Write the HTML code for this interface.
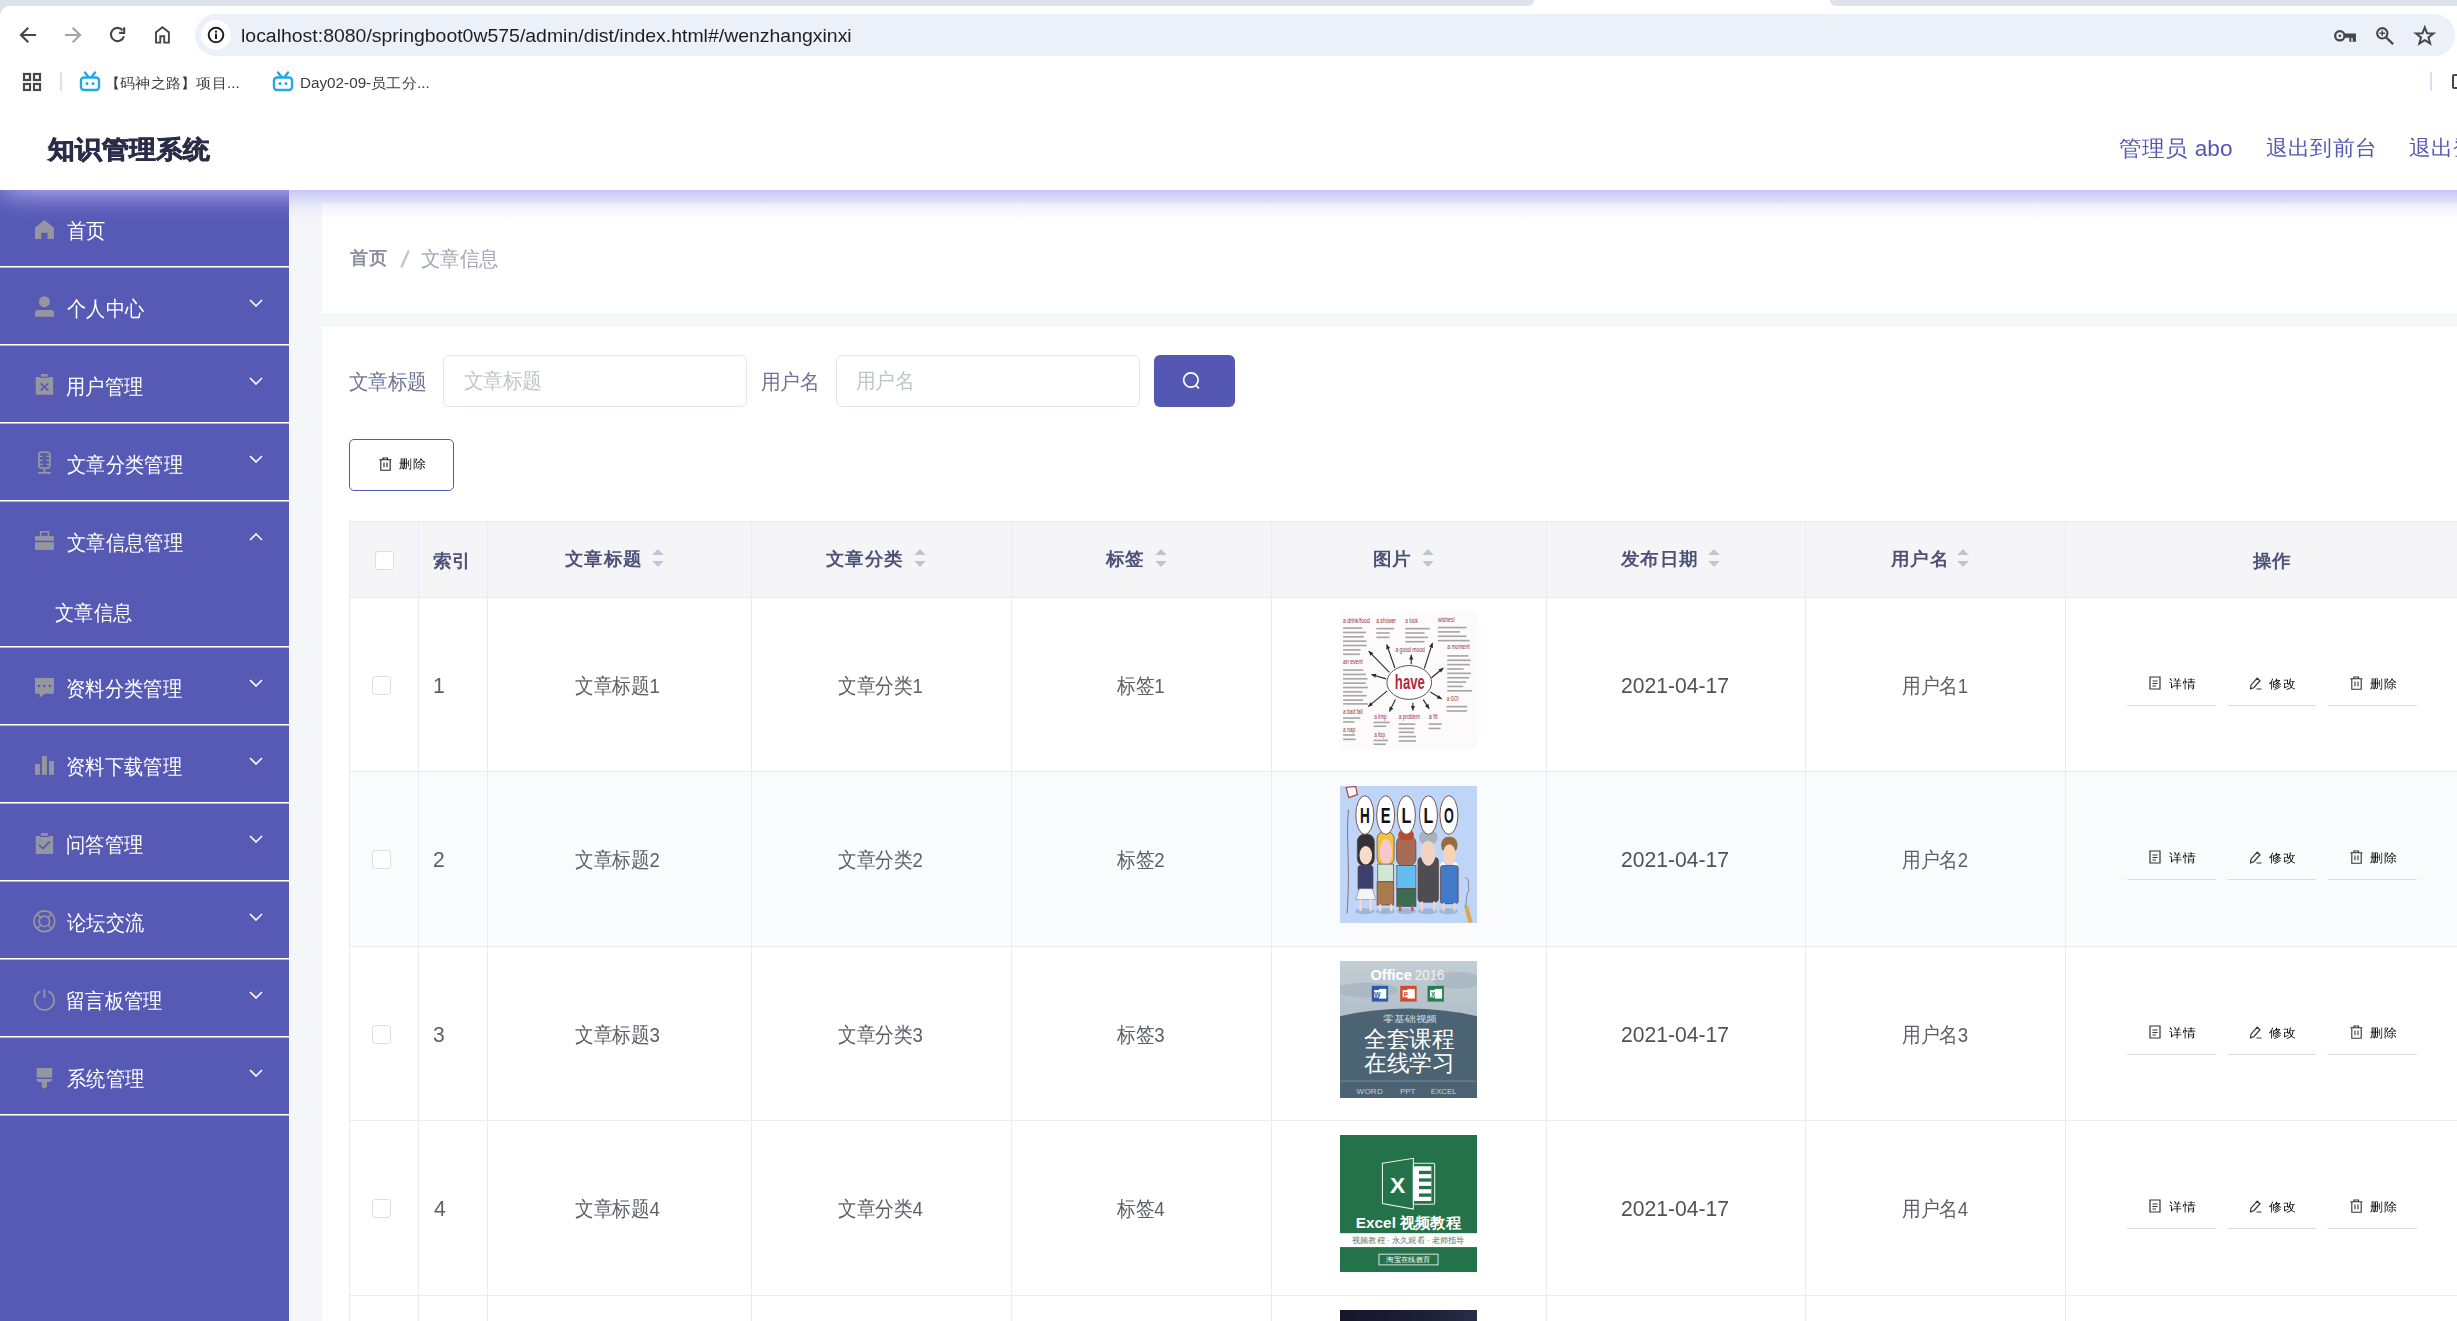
<!DOCTYPE html>
<html><head><meta charset="utf-8">
<style>
*{box-sizing:border-box;margin:0;padding:0}
html,body{width:2457px;height:1321px;overflow:hidden;background:#fff;font-family:"Liberation Sans",sans-serif}
.a{position:absolute}
.t{position:absolute;white-space:nowrap;line-height:30px;height:30px;transform-origin:0 0}
/* chrome */
#tabl{left:0;top:0;width:1534px;height:6px;background:#dee3ea;border-bottom-right-radius:8px}
#tabr{left:1830px;top:0;width:627px;height:6px;background:#dee3ea;border-bottom-left-radius:8px}
#tabbg{left:0;top:0;width:30px;height:30px;background:#dee3ea}
#toolbar{left:0;top:6px;width:2457px;height:104px;background:#fff;border-top-left-radius:10px}
#omni{left:195px;top:14px;width:2260px;height:42px;background:#ecf0f8;border-radius:21px}
#info{left:201px;top:20px;width:30px;height:30px;background:#fff;border-radius:15px}
#url{left:242px;top:20px;font-size:22px;color:#1f1f1f;line-height:30px}
.bm{font-size:17px;color:#3c3c3c;line-height:24px;height:24px}
/* app header */
#hdr{left:0;top:110px;width:2457px;height:80px;background:#fff}
#title{left:47px;top:135px;font-size:28px;font-weight:bold;color:#2b2d42;line-height:30px}
.hl{font-size:22px;color:#5558b3;line-height:30px;top:133px}
/* sidebar */
#side{left:0;top:190px;width:289px;height:1131px;background:#575ab5}
#sideedge{left:289px;top:190px;width:1px;height:1131px;background:#fdfdff}
.sl{left:0;width:289px;height:2px;background:linear-gradient(#fff 0,#fff 50%,rgba(255,255,255,.55) 50%)}
.st{font-size:21px;color:#fff;left:67px}
.si{left:25px;width:40px;height:40px}
.chev{left:249px;width:14px;height:8px}
/* main */
#main{left:290px;top:190px;width:2167px;height:1131px;background:#f5f6f8}
#card1{left:322px;top:203px;width:2135px;height:110px;background:#fff}
#card2{left:322px;top:327px;width:2135px;height:994px;background:#fff}
#shadow{left:0;top:190px;width:2457px;height:34px;background:linear-gradient(to bottom,rgba(173,174,245,.68) 0px,rgba(173,174,245,.5) 5px,rgba(173,174,245,.35) 10px,rgba(173,174,245,.2) 15px,rgba(173,174,245,.1) 20px,rgba(173,174,245,.03) 27px,rgba(173,174,245,0) 34px);-webkit-mask-image:linear-gradient(to right,rgba(0,0,0,.45) 0px,rgba(0,0,0,.85) 18px,#000 36px);mask-image:linear-gradient(to right,rgba(0,0,0,.45) 0px,rgba(0,0,0,.85) 18px,#000 36px)}
.bc{font-size:21px;top:243px}
.lab{font-size:21px;color:#6f7290;top:366px}
.inp{top:355px;height:52px;width:304px;border:1.5px solid #e4e4f7;border-radius:6px;background:#fff}
.ph{font-size:21px;color:#c3c5cd;top:366px}
#sbtn{left:1154px;top:355px;width:81px;height:52px;background:#5558b2;border-radius:6px}
#dbtn{left:349px;top:439px;width:105px;height:52px;border:1.5px solid #5558b2;border-radius:5px;background:#fff}
/* table */
#thead{left:349px;top:521px;width:2108px;height:77px;background:#f5f5f8}
.vl{width:1px;background:#ebebf3}
.hl2{height:1px;background:#ebebf3}
.th{font-size:21px;font-weight:bold;color:#4d5179;top:544px}
.td{font-size:21px;color:#5f6066}
.cb{width:19px;height:19px;border:1.5px solid #dcdfe6;border-radius:3px;background:#fff}
.sort{width:12px;height:22px}
.img{left:1340px;width:137px;height:137px;overflow:hidden}
.op{font-size:14px;color:#222;line-height:18px;height:18px}
.opl{height:1.5px;background:#dcdce8;width:89px}
</style></head><body>
<!-- browser chrome -->
<div class="a" id="tabbg"></div>
<div class="a" id="tabl"></div>
<div class="a" id="tabr"></div>
<div class="a" id="toolbar"></div>
<svg class="a" style="left:14px;top:22px" width="170" height="26" viewBox="0 0 170 26">
 <g fill="none" stroke="#474747" stroke-width="2.2" stroke-linecap="square">
  <path d="M21 13H7.5M13.5 6.5L7 13l6.5 6.5"/>
 </g>
 <g fill="none" stroke="#a4a4a4" stroke-width="2.2" stroke-linecap="square">
  <path d="M52 13h13.5M59.5 6.5L66 13l-6.5 6.5"/>
 </g>
 <g fill="none" stroke="#474747" stroke-width="2.1">
  <path d="M108.56 8.26A6.6 6.6 0 1 0 109.9 14.2"/>
  <path d="M110.2 5.2V10.9H105.1"/>
 </g>
 <path d="M142 20.6V10.2L148.45 5.2L154.9 10.2V20.6H150.2V14.3H146.3V20.6Z" fill="none" stroke="#474747" stroke-width="1.9" stroke-linejoin="miter"/>
</svg>
<div class="a" id="omni"></div>
<div class="a" id="info"></div>
<svg class="a" style="left:207px;top:26px" width="18" height="18" viewBox="0 0 18 18"><circle cx="9" cy="9" r="7.3" fill="none" stroke="#1f1f1f" stroke-width="2"/><rect x="8" y="7.6" width="2" height="5.4" fill="#1f1f1f"/><rect x="8" y="4.6" width="2" height="2" fill="#1f1f1f"/></svg>
<svg class="a" style="left:2300px;top:0px" width="157" height="110" viewBox="0 0 1885 1321">
 <circle cx="478" cy="430" r="56" fill="none" stroke="#474747" stroke-width="27"/>
 <circle cx="478" cy="430" r="17" fill="#474747"/>
 <path d="M532 402H672V500H592V452H532Z" fill="#474747"/><rect x="616" y="455" width="16" height="45" fill="#ecf0f8"/>
 <circle cx="988" cy="400" r="62" fill="none" stroke="#474747" stroke-width="25"/>
 <path d="M1035 450L1118 530" stroke="#474747" stroke-width="28"/>
 <path d="M955 400H1021M988 367V433" stroke="#474747" stroke-width="17"/>
 <path d="M1498 330L1525.6 400L1603 401.8L1542.7 449.5L1563 522L1498 482L1433 522L1453.3 449.5L1392.7 401.8L1470.4 400Z" fill="none" stroke="#474747" stroke-width="24" stroke-linejoin="miter"/>
</svg>
<!-- bookmarks -->
<svg class="a" style="left:22px;top:72px" width="20" height="20" viewBox="0 0 20 20"><g fill="none" stroke="#474747" stroke-width="2.2"><rect x="2" y="2" width="6" height="6"/><rect x="12" y="2" width="6" height="6"/><rect x="2" y="12" width="6" height="6"/><rect x="12" y="12" width="6" height="6"/></g></svg>
<div class="a" style="left:60px;top:72px;width:2px;height:19px;background:#d3e0f5"></div>
<svg class="a" style="left:79px;top:71px" width="22" height="21" viewBox="0 0 22 21"><g fill="none" stroke="#22a9e2" stroke-width="2.4"><rect x="2" y="6.5" width="18" height="12.5" rx="3"/><path d="M6 1.5l3 4M16 1.5l-3 4" stroke-linecap="round"/></g><circle cx="8" cy="12.5" r="1.5" fill="#22a9e2"/><circle cx="14" cy="12.5" r="1.5" fill="#22a9e2"/></svg>
<svg class="a" style="left:272px;top:71px" width="22" height="21" viewBox="0 0 22 21"><g fill="none" stroke="#22a9e2" stroke-width="2.4"><rect x="2" y="6.5" width="18" height="12.5" rx="3"/><path d="M6 1.5l3 4M16 1.5l-3 4" stroke-linecap="round"/></g><circle cx="8" cy="12.5" r="1.5" fill="#22a9e2"/><circle cx="14" cy="12.5" r="1.5" fill="#22a9e2"/></svg>
<div class="a" style="left:2430px;top:72px;width:2px;height:19px;background:#d3e0f5"></div>
<div class="a" style="left:2452px;top:74px;width:10px;height:15px;border:2px solid #474747;border-radius:2px"></div>

<!-- app header -->
<div class="a" id="hdr"></div>

<!-- main bg -->
<div class="a" id="main"></div>
<div class="a" id="card1"></div>
<div class="a" id="card2"></div>

<div class="a" id="side"></div>
<div class="a" id="sideedge"></div>
<div class="a sl" style="top:266px"></div>
<div class="a sl" style="top:344px"></div>
<div class="a sl" style="top:422px"></div>
<div class="a sl" style="top:500px"></div>
<div class="a sl" style="top:646px"></div>
<div class="a sl" style="top:724px"></div>
<div class="a sl" style="top:802px"></div>
<div class="a sl" style="top:880px"></div>
<div class="a sl" style="top:958px"></div>
<div class="a sl" style="top:1036px"></div>
<div class="a sl" style="top:1114px"></div>
<svg class="a si" style="top:210px" viewBox="0 0 1321 1321"><path d="M330 590L640 330 955 590V955H745V755H535V955H330Z" fill="#95969f"/></svg>
<svg class="a si" style="top:287px" viewBox="0 0 1321 1321"><circle cx="640" cy="485" r="180" fill="#95969f"/><path d="M330 985V860Q330 760 430 760H855Q955 760 955 860V985Z" fill="#95969f"/></svg>
<svg class="a chev" style="top:299px" viewBox="0 0 14 8"><path d="M1 1l6 6 6-6" fill="none" stroke="#fff" stroke-width="1.6"/></svg>
<svg class="a si" style="top:365px" viewBox="0 0 1321 1321"><path d="M355 395H495V425H795V395H930V985H355Z" fill="#95969f"/><rect x="525" y="300" width="230" height="85" fill="#95969f"/><path d="M515 605L770 845M770 605L515 845" stroke="#575ab5" stroke-width="55"/></svg>
<svg class="a chev" style="top:377px" viewBox="0 0 14 8"><path d="M1 1l6 6 6-6" fill="none" stroke="#fff" stroke-width="1.6"/></svg>
<svg class="a si" style="top:443px" viewBox="0 0 1321 1321"><rect x="462" y="302" width="363" height="528" rx="95" fill="none" stroke="#95969f" stroke-width="58"/><path d="M470 440H590M700 440H820M470 575H590M700 575H820M470 705H590M700 705H820" stroke="#95969f" stroke-width="45"/><path d="M640 830V985M430 985H855" stroke="#95969f" stroke-width="58"/></svg>
<svg class="a chev" style="top:455px" viewBox="0 0 14 8"><path d="M1 1l6 6 6-6" fill="none" stroke="#fff" stroke-width="1.6"/></svg>
<svg class="a si" style="top:521px" viewBox="0 0 1321 1321"><rect x="517" y="355" width="255" height="160" fill="none" stroke="#95969f" stroke-width="48"/><rect x="330" y="500" width="625" height="150" fill="#95969f"/><rect x="330" y="700" width="625" height="255" fill="#95969f"/></svg>
<svg class="a chev" style="top:533px" viewBox="0 0 14 8"><path d="M1 7l6-6 6 6" fill="none" stroke="#fff" stroke-width="1.6"/></svg>
<svg class="a si" style="top:667px" viewBox="0 0 1321 1321"><path d="M330 365H955V885H660L490 1010V885H330Z" fill="#95969f"/><circle cx="460" cy="625" r="42" fill="#575ab5"/><circle cx="640" cy="625" r="42" fill="#575ab5"/><circle cx="820" cy="625" r="42" fill="#575ab5"/></svg>
<svg class="a chev" style="top:679px" viewBox="0 0 14 8"><path d="M1 1l6 6 6-6" fill="none" stroke="#fff" stroke-width="1.6"/></svg>
<svg class="a si" style="top:745px" viewBox="0 0 1321 1321"><rect x="330" y="630" width="160" height="355" fill="#95969f"/><rect x="562" y="365" width="160" height="620" fill="#95969f"/><rect x="795" y="530" width="160" height="455" fill="#95969f"/></svg>
<svg class="a chev" style="top:757px" viewBox="0 0 14 8"><path d="M1 1l6 6 6-6" fill="none" stroke="#fff" stroke-width="1.6"/></svg>
<svg class="a si" style="top:823px" viewBox="0 0 1321 1321"><path d="M355 430H495V460H795V430H930V1020H355Z" fill="#95969f"/><rect x="525" y="335" width="230" height="85" fill="#95969f"/><path d="M460 720L590 845 815 615" fill="none" stroke="#575ab5" stroke-width="55"/></svg>
<svg class="a chev" style="top:835px" viewBox="0 0 14 8"><path d="M1 1l6 6 6-6" fill="none" stroke="#fff" stroke-width="1.6"/></svg>
<svg class="a si" style="top:901px" viewBox="0 0 1321 1321"><circle cx="640" cy="670" r="342" fill="none" stroke="#95969f" stroke-width="55"/><circle cx="640" cy="670" r="172" fill="none" stroke="#95969f" stroke-width="55"/><path d="M400 430L520 550M880 430L760 550M400 910L520 790M880 910L760 790" stroke="#95969f" stroke-width="50"/></svg>
<svg class="a chev" style="top:913px" viewBox="0 0 14 8"><path d="M1 1l6 6 6-6" fill="none" stroke="#fff" stroke-width="1.6"/></svg>
<svg class="a si" style="top:979px" viewBox="0 0 1321 1321"><path d="M510 410A320 320 0 1 0 770 410" fill="none" stroke="#95969f" stroke-width="58"/><path d="M640 330V620" stroke="#95969f" stroke-width="62"/></svg>
<svg class="a chev" style="top:991px" viewBox="0 0 14 8"><path d="M1 1l6 6 6-6" fill="none" stroke="#fff" stroke-width="1.6"/></svg>
<svg class="a si" style="top:1057px" viewBox="0 0 1321 1321"><rect x="385" y="365" width="510" height="315" fill="#95969f"/><path d="M375 730H905Q895 835 725 835V990L640 1050 555 990V835Q385 835 375 730Z" fill="#95969f"/></svg>
<svg class="a chev" style="top:1069px" viewBox="0 0 14 8"><path d="M1 1l6 6 6-6" fill="none" stroke="#fff" stroke-width="1.6"/></svg>

<div class="a" style="left:400px;top:250px;width:10px;height:18px"><svg width="10" height="18" viewBox="0 0 10 18"><path d="M8.8 0.5L1.2 17.5" stroke="#c0c4cc" stroke-width="2.2"/></svg></div>
<div class="a inp" style="left:443px"></div>
<div class="a inp" style="left:836px"></div>
<div class="a" id="sbtn"></div>
<svg class="a" style="left:1181px;top:371px" width="20" height="20" viewBox="0 0 20 20"><circle cx="9.9" cy="9.0" r="7.2" fill="none" stroke="#fff" stroke-width="1.7"/><path d="M14.9 14.3L17.9 17.5" stroke="#fff" stroke-width="1.7"/></svg>
<div class="a" id="dbtn"></div>
<svg class="a" style="left:378.5px;top:456.5px" width="13" height="14" viewBox="0 0 13 14"><path d="M0.3 2.7H12.4 M3.9 2.7V1H8.5V2.7 M1.8 2.7V13.2H11.2V2.7 M5 5.5V10.3 M8 5.5V10.3" fill="none" stroke="#222" stroke-width="1.1"/></svg>
<div class="a" id="thead"></div>
<div class="a" style="left:349px;top:771px;width:2108px;height:175px;background:#fafbfd"></div>
<div class="a hl2" style="left:349px;top:521px;width:2108px"></div>
<div class="a hl2" style="left:349px;top:597px;width:2108px"></div>
<div class="a hl2" style="left:349px;top:771px;width:2108px"></div>
<div class="a hl2" style="left:349px;top:946px;width:2108px"></div>
<div class="a hl2" style="left:349px;top:1120px;width:2108px"></div>
<div class="a hl2" style="left:349px;top:1295px;width:2108px"></div>
<div class="a vl" style="left:349px;top:521px;height:800px"></div>
<div class="a vl" style="left:418px;top:521px;height:800px"></div>
<div class="a vl" style="left:487px;top:521px;height:800px"></div>
<div class="a vl" style="left:751px;top:521px;height:800px"></div>
<div class="a vl" style="left:1011px;top:521px;height:800px"></div>
<div class="a vl" style="left:1271px;top:521px;height:800px"></div>
<div class="a vl" style="left:1546px;top:521px;height:800px"></div>
<div class="a vl" style="left:1805px;top:521px;height:800px"></div>
<div class="a vl" style="left:2065px;top:521px;height:800px"></div>
<div class="a cb" style="left:375px;top:551px"></div>
<div class="a cb" style="left:372px;top:676px"></div>
<div class="a img" style="top:612px"><svg width="137" height="137" viewBox="37 37 1256 1256" preserveAspectRatio="none"><rect x="37" y="37" width="1256" height="1256" fill="#fcfafb"/><text x="65" y="135" font-family="Liberation Sans" font-size="58" textLength="245" lengthAdjust="spacingAndGlyphs" fill="#962f47">a drink/food</text><text x="370" y="135" font-family="Liberation Sans" font-size="58" textLength="180" lengthAdjust="spacingAndGlyphs" fill="#962f47">a shower</text><text x="635" y="135" font-family="Liberation Sans" font-size="58" textLength="115" lengthAdjust="spacingAndGlyphs" fill="#962f47">a look</text><text x="935" y="130" font-family="Liberation Sans" font-size="58" textLength="155" lengthAdjust="spacingAndGlyphs" fill="#962f47">wishes!</text><text x="545" y="405" font-family="Liberation Sans" font-size="58" textLength="270" lengthAdjust="spacingAndGlyphs" fill="#962f47">a good mood</text><text x="1020" y="380" font-family="Liberation Sans" font-size="58" textLength="205" lengthAdjust="spacingAndGlyphs" fill="#962f47">a moment</text><text x="65" y="515" font-family="Liberation Sans" font-size="58" textLength="180" lengthAdjust="spacingAndGlyphs" fill="#962f47">an event</text><text x="65" y="970" font-family="Liberation Sans" font-size="58" textLength="180" lengthAdjust="spacingAndGlyphs" fill="#962f47">a bad fall</text><text x="350" y="1015" font-family="Liberation Sans" font-size="58" textLength="115" lengthAdjust="spacingAndGlyphs" fill="#962f47">a limp</text><text x="575" y="1015" font-family="Liberation Sans" font-size="58" textLength="195" lengthAdjust="spacingAndGlyphs" fill="#962f47">a problem</text><text x="850" y="1015" font-family="Liberation Sans" font-size="58" textLength="80" lengthAdjust="spacingAndGlyphs" fill="#962f47">a fit</text><text x="1015" y="850" font-family="Liberation Sans" font-size="58" textLength="110" lengthAdjust="spacingAndGlyphs" fill="#962f47">a GO!</text><text x="65" y="1135" font-family="Liberation Sans" font-size="58" textLength="110" lengthAdjust="spacingAndGlyphs" fill="#962f47">a nap</text><text x="350" y="1185" font-family="Liberation Sans" font-size="58" textLength="100" lengthAdjust="spacingAndGlyphs" fill="#962f47">a lisp</text><rect x="65" y="177" width="177" height="15" fill="#333" opacity=".42"/><rect x="65" y="217" width="209" height="15" fill="#333" opacity=".42"/><rect x="65" y="257" width="191" height="15" fill="#333" opacity=".42"/><rect x="65" y="297" width="215" height="15" fill="#333" opacity=".42"/><rect x="65" y="337" width="217" height="15" fill="#333" opacity=".42"/><rect x="65" y="377" width="160" height="15" fill="#333" opacity=".42"/><rect x="65" y="417" width="154" height="15" fill="#333" opacity=".42"/><rect x="370" y="182" width="164" height="15" fill="#333" opacity=".42"/><rect x="370" y="222" width="123" height="15" fill="#333" opacity=".42"/><rect x="370" y="262" width="121" height="15" fill="#333" opacity=".42"/><rect x="635" y="182" width="225" height="15" fill="#333" opacity=".42"/><rect x="635" y="222" width="177" height="15" fill="#333" opacity=".42"/><rect x="635" y="262" width="210" height="15" fill="#333" opacity=".42"/><rect x="635" y="302" width="178" height="15" fill="#333" opacity=".42"/><rect x="935" y="172" width="261" height="15" fill="#333" opacity=".42"/><rect x="935" y="212" width="201" height="15" fill="#333" opacity=".42"/><rect x="935" y="252" width="260" height="15" fill="#333" opacity=".42"/><rect x="935" y="292" width="289" height="15" fill="#333" opacity=".42"/><rect x="1020" y="432" width="194" height="15" fill="#333" opacity=".42"/><rect x="1020" y="472" width="215" height="15" fill="#333" opacity=".42"/><rect x="1020" y="512" width="208" height="15" fill="#333" opacity=".42"/><rect x="1020" y="552" width="150" height="15" fill="#333" opacity=".42"/><rect x="1020" y="592" width="217" height="15" fill="#333" opacity=".42"/><rect x="1020" y="632" width="201" height="15" fill="#333" opacity=".42"/><rect x="1020" y="672" width="173" height="15" fill="#333" opacity=".42"/><rect x="1020" y="712" width="147" height="15" fill="#333" opacity=".42"/><rect x="1020" y="752" width="227" height="15" fill="#333" opacity=".42"/><rect x="65" y="562" width="185" height="15" fill="#333" opacity=".42"/><rect x="65" y="602" width="209" height="15" fill="#333" opacity=".42"/><rect x="65" y="642" width="224" height="15" fill="#333" opacity=".42"/><rect x="65" y="682" width="208" height="15" fill="#333" opacity=".42"/><rect x="65" y="722" width="228" height="15" fill="#333" opacity=".42"/><rect x="65" y="762" width="178" height="15" fill="#333" opacity=".42"/><rect x="65" y="797" width="216" height="15" fill="#333" opacity=".42"/><rect x="65" y="837" width="183" height="15" fill="#333" opacity=".42"/><rect x="65" y="872" width="229" height="15" fill="#333" opacity=".42"/><rect x="65" y="1002" width="157" height="15" fill="#333" opacity=".42"/><rect x="65" y="1037" width="105" height="15" fill="#333" opacity=".42"/><rect x="65" y="1157" width="111" height="15" fill="#333" opacity=".42"/><rect x="65" y="1197" width="117" height="15" fill="#333" opacity=".42"/><rect x="345" y="1042" width="148" height="15" fill="#333" opacity=".42"/><rect x="345" y="1077" width="116" height="15" fill="#333" opacity=".42"/><rect x="345" y="1207" width="132" height="15" fill="#333" opacity=".42"/><rect x="345" y="1242" width="112" height="15" fill="#333" opacity=".42"/><rect x="575" y="1057" width="153" height="15" fill="#333" opacity=".42"/><rect x="575" y="1097" width="143" height="15" fill="#333" opacity=".42"/><rect x="575" y="1132" width="141" height="15" fill="#333" opacity=".42"/><rect x="575" y="1172" width="158" height="15" fill="#333" opacity=".42"/><rect x="575" y="1212" width="158" height="15" fill="#333" opacity=".42"/><rect x="850" y="1057" width="120" height="15" fill="#333" opacity=".42"/><rect x="850" y="1097" width="109" height="15" fill="#333" opacity=".42"/><rect x="1015" y="897" width="189" height="15" fill="#333" opacity=".42"/><rect x="1015" y="937" width="184" height="15" fill="#333" opacity=".42"/><line x1="490" y1="590" x2="300" y2="395" stroke="#2a2a2a" stroke-width="10"/><path d="M300 395L343 412L316 438Z" fill="#2a2a2a"/><line x1="540" y1="550" x2="465" y2="335" stroke="#2a2a2a" stroke-width="10"/><path d="M465 335L497 368L461 381Z" fill="#2a2a2a"/><line x1="690" y1="515" x2="690" y2="430" stroke="#2a2a2a" stroke-width="10"/><path d="M690 430L709 472L671 472Z" fill="#2a2a2a"/><line x1="810" y1="555" x2="885" y2="320" stroke="#2a2a2a" stroke-width="10"/><path d="M885 320L890 366L854 354Z" fill="#2a2a2a"/><line x1="875" y1="640" x2="985" y2="550" stroke="#2a2a2a" stroke-width="10"/><path d="M985 550L965 591L940 562Z" fill="#2a2a2a"/><line x1="865" y1="770" x2="970" y2="835" stroke="#2a2a2a" stroke-width="10"/><path d="M970 835L924 829L944 797Z" fill="#2a2a2a"/><line x1="800" y1="840" x2="855" y2="925" stroke="#2a2a2a" stroke-width="10"/><path d="M855 925L816 900L848 879Z" fill="#2a2a2a"/><line x1="705" y1="870" x2="705" y2="940" stroke="#2a2a2a" stroke-width="10"/><path d="M705 940L686 898L724 898Z" fill="#2a2a2a"/><line x1="545" y1="840" x2="490" y2="950" stroke="#2a2a2a" stroke-width="10"/><path d="M490 950L492 904L526 921Z" fill="#2a2a2a"/><line x1="470" y1="760" x2="295" y2="905" stroke="#2a2a2a" stroke-width="10"/><path d="M295 905L315 864L339 893Z" fill="#2a2a2a"/><line x1="460" y1="650" x2="325" y2="610" stroke="#2a2a2a" stroke-width="10"/><path d="M325 610L371 604L360 640Z" fill="#2a2a2a"/><ellipse cx="672" cy="683" rx="205" ry="155" fill="#fff" stroke="#555" stroke-width="9"/><text x="540" y="745" font-family="Liberation Sans" font-weight="bold" font-size="190" textLength="275" lengthAdjust="spacingAndGlyphs" fill="#b3283d">have</text></svg></div>
<div class="a opl" style="left:2127px;top:704.5px"></div>
<svg class="a" style="left:2148.5px;top:676px" width="12" height="14" viewBox="0 0 12 14"><path d="M1 1h10v12H1z M3.5 5h5 M3.5 7.5h5 M3.5 10h3.5" fill="none" stroke="#333" stroke-width="1.2"/></svg>
<div class="a opl" style="left:2227px;top:704.5px"></div>
<svg class="a" style="left:2248.5px;top:676px" width="14" height="14" viewBox="0 0 14 14"><path d="M1.5 12.8l.5-3.6 6.2-7 2.8 2.5-6.2 7z M7.5 13h5" fill="none" stroke="#333" stroke-width="1.2"/></svg>
<div class="a opl" style="left:2328px;top:704.5px"></div>
<svg class="a" style="left:2349.5px;top:676px" width="13" height="14" viewBox="0 0 13 14"><path d="M0.3 2.7H12.4 M3.9 2.7V1H8.5V2.7 M1.8 2.7V13.2H11.2V2.7 M5 5.5V10.3 M8 5.5V10.3" fill="none" stroke="#333" stroke-width="1.1"/></svg>
<div class="a cb" style="left:372px;top:850px"></div>
<div class="a img" style="top:786px"><svg width="137" height="137" viewBox="73 117 1005 1005" preserveAspectRatio="none"><rect x="73" y="117" width="1005" height="1005" fill="#bed5f7"/><path d="M135 290C115 500 150 700 125 1050" fill="none" stroke="#6c5a5a" stroke-width="6"/><path d="M118 128l70 -8l12 60l-62 22z" fill="#fff" stroke="#a44" stroke-width="9"/><ellipse cx="255" cy="1035" rx="70" ry="22" fill="#9db5de"/><ellipse cx="405" cy="1035" rx="70" ry="22" fill="#9db5de"/><ellipse cx="560" cy="1035" rx="70" ry="22" fill="#9db5de"/><ellipse cx="715" cy="1035" rx="70" ry="22" fill="#9db5de"/><ellipse cx="870" cy="1035" rx="70" ry="22" fill="#9db5de"/><rect x="200" y="470" width="125" height="235" rx="55" fill="#333" stroke="#5a4040" stroke-width="5"/><ellipse cx="262" cy="625" rx="46" ry="68" fill="#f6dccc"/><rect x="205" y="700" width="110" height="185" rx="20" fill="#3c4070" stroke="#5a4040" stroke-width="5"/><path d="M190 950L215 870H310L335 950Z" fill="#f5f5f5" stroke="#8a7a7a" stroke-width="4"/><rect x="215" y="950" width="16" height="85" fill="#f6dccc"/><rect x="290" y="950" width="16" height="85" fill="#f6dccc"/><rect x="345" y="450" width="125" height="250" rx="55" fill="#f2c23f" stroke="#5a4040" stroke-width="5"/><ellipse cx="410" cy="600" rx="46" ry="92" fill="#f7c8cc"/><rect x="350" y="690" width="115" height="130" fill="#cfe8d6" stroke="#5a4040" stroke-width="5"/><rect x="345" y="820" width="122" height="170" fill="#aa7a4d" stroke="#5a4040" stroke-width="5"/><rect x="360" y="985" width="16" height="50" fill="#f6dccc"/><rect x="440" y="985" width="16" height="50" fill="#f6dccc"/><rect x="488" y="480" width="142" height="225" rx="55" fill="#a66c54" stroke="#5a4040" stroke-width="5"/><rect x="500" y="440" width="115" height="75" rx="35" fill="#c24a2c"/><rect x="490" y="700" width="140" height="170" fill="#64bdf0" stroke="#5a4040" stroke-width="5"/><rect x="490" y="870" width="140" height="130" fill="#3b6c4f" stroke="#5a4040" stroke-width="5"/><rect x="505" y="995" width="18" height="40" fill="#a66c54"/><rect x="595" y="995" width="18" height="40" fill="#a66c54"/><rect x="645" y="640" width="150" height="330" rx="30" fill="#4d4d52" stroke="#5a4040" stroke-width="5"/><rect x="652" y="440" width="136" height="110" rx="55" fill="#a9b2bd"/><ellipse cx="720" cy="610" rx="55" ry="92" fill="#f1d3c3"/><rect x="665" y="965" width="18" height="70" fill="#f1d3c3"/><rect x="755" y="965" width="18" height="70" fill="#f1d3c3"/><ellipse cx="828" cy="715" rx="22" ry="40" fill="#fff"/><ellipse cx="918" cy="715" rx="22" ry="40" fill="#fff"/><rect x="810" y="700" width="130" height="280" rx="18" fill="#4279c9" stroke="#5a4040" stroke-width="5"/><rect x="815" y="490" width="120" height="120" rx="55" fill="#9b6b40"/><ellipse cx="875" cy="620" rx="46" ry="75" fill="#f6d3b9"/><rect x="825" y="975" width="16" height="60" fill="#f6d3b9"/><rect x="905" y="975" width="16" height="60" fill="#f6d3b9"/><ellipse cx="255" cy="330" rx="66" ry="142" fill="#fff" stroke="#6a5050" stroke-width="7"/><text x="255" y="392" text-anchor="middle" font-family="Liberation Sans" font-weight="bold" font-size="160" fill="#111" textLength="72" lengthAdjust="spacingAndGlyphs">H</text><ellipse cx="408" cy="330" rx="66" ry="142" fill="#fff" stroke="#6a5050" stroke-width="7"/><text x="408" y="392" text-anchor="middle" font-family="Liberation Sans" font-weight="bold" font-size="160" fill="#111" textLength="72" lengthAdjust="spacingAndGlyphs">E</text><ellipse cx="560" cy="330" rx="66" ry="142" fill="#fff" stroke="#6a5050" stroke-width="7"/><text x="560" y="392" text-anchor="middle" font-family="Liberation Sans" font-weight="bold" font-size="160" fill="#111" textLength="72" lengthAdjust="spacingAndGlyphs">L</text><ellipse cx="722" cy="330" rx="66" ry="142" fill="#fff" stroke="#6a5050" stroke-width="7"/><text x="722" y="392" text-anchor="middle" font-family="Liberation Sans" font-weight="bold" font-size="160" fill="#111" textLength="72" lengthAdjust="spacingAndGlyphs">L</text><ellipse cx="872" cy="330" rx="66" ry="142" fill="#fff" stroke="#6a5050" stroke-width="7"/><text x="872" y="392" text-anchor="middle" font-family="Liberation Sans" font-weight="bold" font-size="160" fill="#111" textLength="72" lengthAdjust="spacingAndGlyphs">O</text><path d="M985 1000L1010 990L1045 1115L1015 1122Z" fill="#d9a84a"/><path d="M990 790C1040 800 1000 850 1020 880C990 920 1010 960 990 1000" fill="none" stroke="#6c5a5a" stroke-width="5"/></svg></div>
<div class="a opl" style="left:2127px;top:878.5px"></div>
<svg class="a" style="left:2148.5px;top:850px" width="12" height="14" viewBox="0 0 12 14"><path d="M1 1h10v12H1z M3.5 5h5 M3.5 7.5h5 M3.5 10h3.5" fill="none" stroke="#333" stroke-width="1.2"/></svg>
<div class="a opl" style="left:2227px;top:878.5px"></div>
<svg class="a" style="left:2248.5px;top:850px" width="14" height="14" viewBox="0 0 14 14"><path d="M1.5 12.8l.5-3.6 6.2-7 2.8 2.5-6.2 7z M7.5 13h5" fill="none" stroke="#333" stroke-width="1.2"/></svg>
<div class="a opl" style="left:2328px;top:878.5px"></div>
<svg class="a" style="left:2349.5px;top:850px" width="13" height="14" viewBox="0 0 13 14"><path d="M0.3 2.7H12.4 M3.9 2.7V1H8.5V2.7 M1.8 2.7V13.2H11.2V2.7 M5 5.5V10.3 M8 5.5V10.3" fill="none" stroke="#333" stroke-width="1.1"/></svg>
<div class="a cb" style="left:372px;top:1025px"></div>
<div class="a img" style="top:961px"><svg width="137" height="137" viewBox="83 90 1130 1130" preserveAspectRatio="none"><defs><linearGradient id="og" x1="0" y1="0" x2="0" y2="1"><stop offset="0" stop-color="#c3cdd4"/><stop offset=".5" stop-color="#aebcc6"/><stop offset="1" stop-color="#c0cbd2"/></linearGradient></defs><rect x="83" y="90" width="1130" height="1130" fill="url(#og)"/><ellipse cx="300" cy="330" rx="260" ry="60" fill="#9aabb8" opacity=".5"/><ellipse cx="1050" cy="250" rx="200" ry="70" fill="#9aabb8" opacity=".5"/><path d="M83 545Q648 420 1213 545V1220H83Z" fill="#4b6373"/><text x="335" y="245" font-family="Liberation Sans" font-weight="bold" font-size="118" fill="#fff" textLength="340" lengthAdjust="spacingAndGlyphs">Office</text><text x="700" y="245" font-family="Liberation Sans" font-size="118" fill="#eef2f4" textLength="245" lengthAdjust="spacingAndGlyphs">2016</text><rect x="345" y="295" width="135" height="130" fill="#2b5aa8"/><rect x="405" y="320" width="60" height="80" fill="#fff"/><rect x="365" y="330" width="55" height="60" fill="#fff"/><rect x="580" y="295" width="135" height="130" fill="#d34a2a"/><rect x="640" y="320" width="60" height="80" fill="#fff"/><rect x="600" y="330" width="55" height="60" fill="#fff"/><rect x="805" y="295" width="135" height="130" fill="#23824a"/><rect x="865" y="320" width="60" height="80" fill="#fff"/><rect x="825" y="330" width="55" height="60" fill="#fff"/><text x="662" y="595" text-anchor="middle" font-family="Liberation Sans" font-size="78" fill="#d5dde2" textLength="445" lengthAdjust="spacingAndGlyphs">零基础视频</text><text x="655" y="800" text-anchor="middle" font-family="Liberation Sans" font-size="188" fill="#fff" textLength="750" lengthAdjust="spacingAndGlyphs">全套课程</text><text x="655" y="1000" text-anchor="middle" font-family="Liberation Sans" font-size="188" fill="#fff" textLength="750" lengthAdjust="spacingAndGlyphs">在线学习</text><rect x="90" y="1077" width="1115" height="7" fill="#8295a2"/><text x="220" y="1185" font-family="Liberation Sans" font-size="66" fill="#c9d2d8" textLength="215" lengthAdjust="spacing">WORD</text><text x="578" y="1185" font-family="Liberation Sans" font-size="66" fill="#c9d2d8" textLength="127" lengthAdjust="spacing">PPT</text><text x="832" y="1185" font-family="Liberation Sans" font-size="66" fill="#c9d2d8" textLength="213" lengthAdjust="spacing">EXCEL</text><text x="392" y="385" text-anchor="middle" font-family="Liberation Sans" font-weight="bold" font-size="55" fill="#2b5aa8">W</text><text x="627" y="385" text-anchor="middle" font-family="Liberation Sans" font-weight="bold" font-size="55" fill="#d34a2a">P</text><text x="852" y="385" text-anchor="middle" font-family="Liberation Sans" font-weight="bold" font-size="55" fill="#23824a">X</text></svg></div>
<div class="a opl" style="left:2127px;top:1053.5px"></div>
<svg class="a" style="left:2148.5px;top:1025px" width="12" height="14" viewBox="0 0 12 14"><path d="M1 1h10v12H1z M3.5 5h5 M3.5 7.5h5 M3.5 10h3.5" fill="none" stroke="#333" stroke-width="1.2"/></svg>
<div class="a opl" style="left:2227px;top:1053.5px"></div>
<svg class="a" style="left:2248.5px;top:1025px" width="14" height="14" viewBox="0 0 14 14"><path d="M1.5 12.8l.5-3.6 6.2-7 2.8 2.5-6.2 7z M7.5 13h5" fill="none" stroke="#333" stroke-width="1.2"/></svg>
<div class="a opl" style="left:2328px;top:1053.5px"></div>
<svg class="a" style="left:2349.5px;top:1025px" width="13" height="14" viewBox="0 0 13 14"><path d="M0.3 2.7H12.4 M3.9 2.7V1H8.5V2.7 M1.8 2.7V13.2H11.2V2.7 M5 5.5V10.3 M8 5.5V10.3" fill="none" stroke="#333" stroke-width="1.1"/></svg>
<div class="a cb" style="left:372px;top:1199px"></div>
<div class="a img" style="top:1135px"><svg width="137" height="137" viewBox="66 98 900 907" preserveAspectRatio="none"><rect x="66" y="98" width="900" height="907" fill="#24724a"/><path d="M345 285L548 252V588L345 552Z" fill="none" stroke="#e9f2ec" stroke-width="7"/><rect x="548" y="285" width="140" height="272" rx="8" fill="none" stroke="#e9f2ec" stroke-width="7"/><rect x="548" y="305" width="118" height="230" fill="#fff"/><rect x="585" y="335" width="81" height="22" fill="#24724a"/><rect x="585" y="385" width="81" height="22" fill="#24724a"/><rect x="585" y="435" width="81" height="22" fill="#24724a"/><rect x="585" y="485" width="81" height="22" fill="#24724a"/><text x="445" y="480" text-anchor="middle" font-family="Liberation Sans" font-weight="bold" font-size="150" fill="#fff">X</text><text x="515" y="712" text-anchor="middle" font-family="Liberation Sans" font-weight="bold" font-size="100" fill="#fff" textLength="690" lengthAdjust="spacingAndGlyphs">Excel 视频教程</text><rect x="66" y="748" width="900" height="92" fill="#fff"/><text x="515" y="815" text-anchor="middle" font-family="Liberation Sans" font-size="52" fill="#5b7566" textLength="740" lengthAdjust="spacingAndGlyphs">视频教程 · 永久观看 · 老师指导</text><rect x="322" y="887" width="388" height="71" fill="none" stroke="#e9f2ec" stroke-width="6"/><text x="516" y="942" text-anchor="middle" font-family="Liberation Sans" font-size="48" fill="#fff" textLength="290" lengthAdjust="spacingAndGlyphs">淘宝在线教育</text></svg></div>
<div class="a opl" style="left:2127px;top:1227.5px"></div>
<svg class="a" style="left:2148.5px;top:1199px" width="12" height="14" viewBox="0 0 12 14"><path d="M1 1h10v12H1z M3.5 5h5 M3.5 7.5h5 M3.5 10h3.5" fill="none" stroke="#333" stroke-width="1.2"/></svg>
<div class="a opl" style="left:2227px;top:1227.5px"></div>
<svg class="a" style="left:2248.5px;top:1199px" width="14" height="14" viewBox="0 0 14 14"><path d="M1.5 12.8l.5-3.6 6.2-7 2.8 2.5-6.2 7z M7.5 13h5" fill="none" stroke="#333" stroke-width="1.2"/></svg>
<div class="a opl" style="left:2328px;top:1227.5px"></div>
<svg class="a" style="left:2349.5px;top:1199px" width="13" height="14" viewBox="0 0 13 14"><path d="M0.3 2.7H12.4 M3.9 2.7V1H8.5V2.7 M1.8 2.7V13.2H11.2V2.7 M5 5.5V10.3 M8 5.5V10.3" fill="none" stroke="#333" stroke-width="1.1"/></svg>
<div class="a img" style="top:1310px;height:11px;background:linear-gradient(90deg,#15162a,#1d1f35 60%,#2a2d46)"></div>
<svg class="a sort" style="left:651.65px;top:548px" viewBox="0 0 12 22"><path d="M6 1L11.7 7H0.3z" fill="#c0c4cc"/><path d="M6 19L11.7 13H0.3z" fill="#c0c4cc"/></svg>
<svg class="a sort" style="left:914.13px;top:548px" viewBox="0 0 12 22"><path d="M6 1L11.7 7H0.3z" fill="#c0c4cc"/><path d="M6 19L11.7 13H0.3z" fill="#c0c4cc"/></svg>
<svg class="a sort" style="left:1155.25px;top:548px" viewBox="0 0 12 22"><path d="M6 1L11.7 7H0.3z" fill="#c0c4cc"/><path d="M6 19L11.7 13H0.3z" fill="#c0c4cc"/></svg>
<svg class="a sort" style="left:1421.78px;top:548px" viewBox="0 0 12 22"><path d="M6 1L11.7 7H0.3z" fill="#c0c4cc"/><path d="M6 19L11.7 13H0.3z" fill="#c0c4cc"/></svg>
<svg class="a sort" style="left:1708.15px;top:548px" viewBox="0 0 12 22"><path d="M6 1L11.7 7H0.3z" fill="#c0c4cc"/><path d="M6 19L11.7 13H0.3z" fill="#c0c4cc"/></svg>
<svg class="a sort" style="left:1957.00px;top:548px" viewBox="0 0 12 22"><path d="M6 1L11.7 7H0.3z" fill="#c0c4cc"/><path d="M6 19L11.7 13H0.3z" fill="#c0c4cc"/></svg>

<div class="t" style="left:241.40px;top:21.69px;transform:scale(0.9971,0.9158);font-size:19.5px;color:#1f1f1f;">localhost:8080/springboot0w575/admin/dist/index.html#/wenzhangxinxi</div>
<div class="t" style="left:105.47px;top:69.97px;transform:scale(0.9531,0.8875);font-size:16px;color:#3b3b3b;">【码神之路】项目...</div>
<div class="t" style="left:299.95px;top:69.97px;transform:scale(0.9531,0.8875);font-size:16px;color:#3b3b3b;">Day02-09-员工分...</div>
<div class="t" style="left:48.00px;top:135.60px;transform:scale(1.0024,0.9345);font-size:27px;font-weight:bold;-webkit-text-stroke-width:0.8px;color:#2a2d48;">知识管理系统</div>
<div class="t" style="left:2119.29px;top:134.45px;transform:scale(1.0063,0.9818);font-size:22.5px;color:#5558b3;">管理员 abo</div>
<div class="t" style="left:2266.10px;top:135.01px;transform:scale(0.9673,0.9304);font-size:22.5px;color:#5558b3;">退出到前台</div>
<div class="t" style="left:2408.70px;top:135.01px;transform:scale(0.9673,0.9304);font-size:22.5px;color:#5558b3;">退出登录</div>
<div class="t" style="left:67.10px;top:215.78px;transform:scale(0.9206,1.0048);font-size:21px;color:#fff;">首页</div>
<div class="t" style="left:67.10px;top:293.78px;transform:scale(0.9206,1.0048);font-size:21px;color:#fff;">个人中心</div>
<div class="t" style="left:66.18px;top:371.78px;transform:scale(0.9206,1.0048);font-size:21px;color:#fff;">用户管理</div>
<div class="t" style="left:67.10px;top:449.78px;transform:scale(0.9206,1.0048);font-size:21px;color:#fff;">文章分类管理</div>
<div class="t" style="left:67.10px;top:527.78px;transform:scale(0.9206,1.0048);font-size:21px;color:#fff;">文章信息管理</div>
<div class="t" style="left:66.18px;top:673.78px;transform:scale(0.9206,1.0048);font-size:21px;color:#fff;">资料分类管理</div>
<div class="t" style="left:66.18px;top:751.78px;transform:scale(0.9206,1.0048);font-size:21px;color:#fff;">资料下载管理</div>
<div class="t" style="left:66.18px;top:829.78px;transform:scale(0.9206,1.0048);font-size:21px;color:#fff;">问答管理</div>
<div class="t" style="left:67.10px;top:907.78px;transform:scale(0.9206,1.0048);font-size:21px;color:#fff;">论坛交流</div>
<div class="t" style="left:66.18px;top:985.78px;transform:scale(0.9206,1.0048);font-size:21px;color:#fff;">留言板管理</div>
<div class="t" style="left:67.10px;top:1063.78px;transform:scale(0.9206,1.0048);font-size:21px;color:#fff;">系统管理</div>
<div class="t" style="left:54.90px;top:597.93px;transform:scale(0.9206,1.0048);font-size:21px;color:#fff;">文章信息</div>
<div class="t" style="left:349.90px;top:244.38px;transform:scale(0.9737,0.9632);font-size:19px;font-weight:bold;color:#8c909f;">首页</div>
<div class="t" style="left:421.40px;top:244.00px;transform:scale(0.9265,1.0000);font-size:21px;color:#a3a7b4;">文章信息</div>
<div class="t" style="left:349.40px;top:367.28px;transform:scale(0.9229,0.9810);font-size:21px;color:#6f7296;">文章标题</div>
<div class="t" style="left:464.40px;top:366.38px;transform:scale(0.9229,0.9810);font-size:21px;color:#c2c4cc;">文章标题</div>
<div class="t" style="left:761.08px;top:367.28px;transform:scale(0.9229,0.9810);font-size:21px;color:#6f7296;">用户名</div>
<div class="t" style="left:856.08px;top:366.38px;transform:scale(0.9229,0.9810);font-size:21px;color:#c2c4cc;">用户名</div>
<div class="t" style="left:398.50px;top:450.95px;transform:scale(0.9133,0.8500);font-size:14.5px;color:#000;">删除</div>
<div class="t" style="left:432.70px;top:546.10px;transform:scale(0.9684,0.9400);font-size:19.5px;font-weight:bold;color:#4d5178;">索引</div>
<div class="t" style="left:2253.12px;top:546.10px;transform:scale(0.9684,0.9400);font-size:19.5px;font-weight:bold;color:#4d5178;">操作</div>
<div class="t" style="left:432.99px;top:669.33px;transform:scale(1.0066,1.0714);font-size:21px;color:#5e5f66;">1</div>
<div class="t" style="left:574.90px;top:671.02px;transform:scale(0.8863,0.9952);font-size:21px;color:#5e5f66;">文章标题1</div>
<div class="t" style="left:837.70px;top:671.02px;transform:scale(0.8863,0.9952);font-size:21px;color:#5e5f66;">文章分类1</div>
<div class="t" style="left:1116.61px;top:671.02px;transform:scale(0.8863,0.9952);font-size:21px;color:#5e5f66;">标签1</div>
<div class="t" style="left:1901.66px;top:671.02px;transform:scale(0.8863,0.9952);font-size:21px;color:#5e5f66;">用户名1</div>
<div class="t" style="left:1621.39px;top:669.33px;transform:scale(1.0066,1.0714);font-size:21px;color:#505157;">2021-04-17</div>
<div class="t" style="left:2168.50px;top:671.05px;transform:scale(0.9133,0.8500);font-size:14.5px;color:#000;">详情</div>
<div class="t" style="left:2268.50px;top:671.05px;transform:scale(0.9133,0.8500);font-size:14.5px;color:#000;">修改</div>
<div class="t" style="left:2369.50px;top:671.05px;transform:scale(0.9133,0.8500);font-size:14.5px;color:#000;">删除</div>
<div class="t" style="left:432.99px;top:843.33px;transform:scale(1.0066,1.0714);font-size:21px;color:#5e5f66;">2</div>
<div class="t" style="left:574.90px;top:845.02px;transform:scale(0.8863,0.9952);font-size:21px;color:#5e5f66;">文章标题2</div>
<div class="t" style="left:837.70px;top:845.02px;transform:scale(0.8863,0.9952);font-size:21px;color:#5e5f66;">文章分类2</div>
<div class="t" style="left:1116.61px;top:845.02px;transform:scale(0.8863,0.9952);font-size:21px;color:#5e5f66;">标签2</div>
<div class="t" style="left:1901.66px;top:845.02px;transform:scale(0.8863,0.9952);font-size:21px;color:#5e5f66;">用户名2</div>
<div class="t" style="left:1621.39px;top:843.33px;transform:scale(1.0066,1.0714);font-size:21px;color:#505157;">2021-04-17</div>
<div class="t" style="left:2168.50px;top:845.05px;transform:scale(0.9133,0.8500);font-size:14.5px;color:#000;">详情</div>
<div class="t" style="left:2268.50px;top:845.05px;transform:scale(0.9133,0.8500);font-size:14.5px;color:#000;">修改</div>
<div class="t" style="left:2369.50px;top:845.05px;transform:scale(0.9133,0.8500);font-size:14.5px;color:#000;">删除</div>
<div class="t" style="left:432.99px;top:1018.33px;transform:scale(1.0066,1.0714);font-size:21px;color:#5e5f66;">3</div>
<div class="t" style="left:574.90px;top:1020.02px;transform:scale(0.8863,0.9952);font-size:21px;color:#5e5f66;">文章标题3</div>
<div class="t" style="left:837.70px;top:1020.02px;transform:scale(0.8863,0.9952);font-size:21px;color:#5e5f66;">文章分类3</div>
<div class="t" style="left:1116.61px;top:1020.02px;transform:scale(0.8863,0.9952);font-size:21px;color:#5e5f66;">标签3</div>
<div class="t" style="left:1901.66px;top:1020.02px;transform:scale(0.8863,0.9952);font-size:21px;color:#5e5f66;">用户名3</div>
<div class="t" style="left:1621.39px;top:1018.33px;transform:scale(1.0066,1.0714);font-size:21px;color:#505157;">2021-04-17</div>
<div class="t" style="left:2168.50px;top:1020.05px;transform:scale(0.9133,0.8500);font-size:14.5px;color:#000;">详情</div>
<div class="t" style="left:2268.50px;top:1020.05px;transform:scale(0.9133,0.8500);font-size:14.5px;color:#000;">修改</div>
<div class="t" style="left:2369.50px;top:1020.05px;transform:scale(0.9133,0.8500);font-size:14.5px;color:#000;">删除</div>
<div class="t" style="left:434.00px;top:1192.33px;transform:scale(1.0066,1.0714);font-size:21px;color:#5e5f66;">4</div>
<div class="t" style="left:574.90px;top:1194.02px;transform:scale(0.8863,0.9952);font-size:21px;color:#5e5f66;">文章标题4</div>
<div class="t" style="left:837.70px;top:1194.02px;transform:scale(0.8863,0.9952);font-size:21px;color:#5e5f66;">文章分类4</div>
<div class="t" style="left:1116.61px;top:1194.02px;transform:scale(0.8863,0.9952);font-size:21px;color:#5e5f66;">标签4</div>
<div class="t" style="left:1901.66px;top:1194.02px;transform:scale(0.8863,0.9952);font-size:21px;color:#5e5f66;">用户名4</div>
<div class="t" style="left:1621.39px;top:1192.33px;transform:scale(1.0066,1.0714);font-size:21px;color:#505157;">2021-04-17</div>
<div class="t" style="left:2168.50px;top:1194.05px;transform:scale(0.9133,0.8500);font-size:14.5px;color:#000;">详情</div>
<div class="t" style="left:2268.50px;top:1194.05px;transform:scale(0.9133,0.8500);font-size:14.5px;color:#000;">修改</div>
<div class="t" style="left:2369.50px;top:1194.05px;transform:scale(0.9133,0.8500);font-size:14.5px;color:#000;">删除</div>
<div class="t" style="left:564.65px;top:544.30px;transform:scale(0.9684,0.9400);font-size:19.5px;font-weight:bold;color:#4d5178">文章标题</div>
<div class="t" style="left:826.17px;top:544.30px;transform:scale(0.9684,0.9400);font-size:19.5px;font-weight:bold;color:#4d5178">文章分类</div>
<div class="t" style="left:1106.02px;top:544.30px;transform:scale(0.9684,0.9400);font-size:19.5px;font-weight:bold;color:#4d5178">标签</div>
<div class="t" style="left:1372.55px;top:544.30px;transform:scale(0.9684,0.9400);font-size:19.5px;font-weight:bold;color:#4d5178">图片</div>
<div class="t" style="left:1621.15px;top:544.30px;transform:scale(0.9684,0.9400);font-size:19.5px;font-weight:bold;color:#4d5178">发布日期</div>
<div class="t" style="left:1891.30px;top:544.30px;transform:scale(0.9684,0.9400);font-size:19.5px;font-weight:bold;color:#4d5178">用户名</div>
<div class="a" id="shadow"></div>
</body></html>
